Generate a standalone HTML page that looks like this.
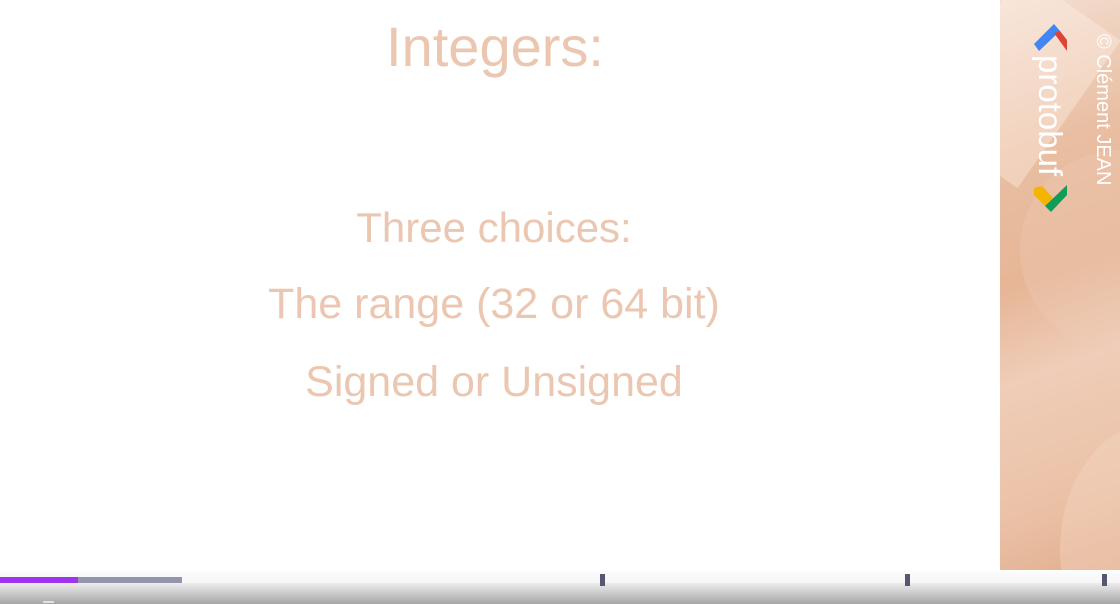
<!DOCTYPE html>
<html><head><meta charset="utf-8"><style>
*{margin:0;padding:0;box-sizing:border-box}
html,body{width:1120px;height:604px;overflow:hidden}
body{background:#fff;position:relative;font-family:"Liberation Sans",sans-serif}
.t{position:absolute;left:0;width:1000px;text-align:center;color:#ebc7b1;white-space:nowrap}
.side{position:absolute;left:1000px;top:0;width:120px;height:604px;overflow:hidden;
background:linear-gradient(160deg,#f3dfd2 0%,#e9bea2 25%,#e6b696 45%,#efcdb8 60%,#ebc2a7 80%,#dfa888 100%)}
.bot{position:absolute;left:0;top:570px;width:1120px;height:34px;background:linear-gradient(#fff 0%,#f4f4f4 30%,#d4d4d4 60%,#a5a5a5 100%)}
</style></head><body>
<div class="t" style="top:14px;font-size:56px;left:-5px">Integers:</div>
<div class="t" style="top:204px;font-size:42px;left:-6px">Three choices:</div>
<div class="t" style="top:280px;font-size:43px;left:-6px">The range (32 or 64 bit)</div>
<div class="t" style="top:358px;font-size:43px;left:-6px">Signed or Unsigned</div>
<div class="side">
<div style="position:absolute;left:-40px;top:-10px;width:120px;height:180px;background:rgba(255,240,230,0.4);transform:rotate(35deg)"></div>
<div style="position:absolute;left:20px;top:150px;width:200px;height:200px;border-radius:50%;background:rgba(240,205,185,0.3)"></div>
<div style="position:absolute;left:60px;top:420px;width:200px;height:260px;border-radius:50%;background:rgba(245,215,195,0.4)"></div>
<svg style="position:absolute;left:33px;top:23px" width="36" height="192" viewBox="0 0 36 192">
<polygon points="1,21 21,1 27,8 6,28" fill="#4285f4"/>
<polygon points="21,10 27,8 34,17 34,28" fill="#db4437"/>
<polygon points="1,165 9,163 20,175 12,183 1,172" fill="#f4b400"/>
<polygon points="12,183 34,162 34,172 18,189" fill="#0f9d58"/>
</svg>
<div style="position:absolute;left:32px;top:55px;transform-origin:0 0;transform:rotate(90deg) translate(0,-36px);color:#fff;font-size:33px;white-space:nowrap;line-height:36px">protobuf</div>
<div style="position:absolute;left:92px;top:34px;transform-origin:0 0;transform:rotate(90deg) translate(0,-22px);color:#fff;font-size:20px;white-space:nowrap;line-height:22px">© Clément JEAN</div>
</div>
<div class="bot"></div>
<div style="position:absolute;left:0;top:577px;width:1120px;height:6px;background:rgba(248,248,250,0.75)"></div>
<div style="position:absolute;left:0;top:577px;width:78px;height:6px;background:#a033ee"></div>
<div style="position:absolute;left:78px;top:577px;width:104px;height:6px;background:#9495ad"></div>
<div style="position:absolute;left:600px;top:574px;width:5px;height:12px;background:#565870"></div>
<div style="position:absolute;left:905px;top:574px;width:5px;height:12px;background:#565870"></div>
<div style="position:absolute;left:1102px;top:574px;width:5px;height:12px;background:#565870"></div>
<div style="position:absolute;left:43px;top:601px;width:11px;height:2px;background:#e0e0ea"></div>
</body></html>
